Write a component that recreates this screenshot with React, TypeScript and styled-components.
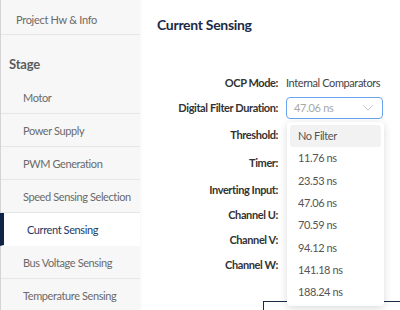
import React from 'react';
import styled, { createGlobalStyle } from 'styled-components';

const GlobalStyle = createGlobalStyle`
  html, body {
    margin: 0;
    padding: 0;
    background: #ffffff;
    font-family: Lato, 'Noto Sans', sans-serif;
    overflow: hidden;
  }
`;

interface Field {
  label: string;
  value?: string;
  h: number;
}

const fields: Field[] = [
  { label: 'OCP Mode:', value: 'Internal Comparators', h: 25 },
  { label: 'Digital Filter Duration:', h: 25 },
  { label: 'Threshold:', h: 29 },
  { label: 'Timer:', h: 27 },
  { label: 'Inverting Input:', h: 26 },
  { label: 'Channel U:', h: 25 },
  { label: 'Channel V:', h: 25 },
  { label: 'Channel W:', h: 25 },
];

const filterOptions = [
  'No Filter',
  '11.76 ns',
  '23.53 ns',
  '47.06 ns',
  '70.59 ns',
  '94.12 ns',
  '141.18 ns',
  '188.24 ns',
];

const stageItems = [
  'Motor',
  'Power Supply',
  'PWM Generation',
  'Speed Sensing Selection',
  'Current Sensing',
  'Bus Voltage Sensing',
  'Temperature Sensing',
];

const Chevron = () => (
  <svg width="10" height="6" viewBox="0 0 10 6" fill="none">
    <path d="M0.5 0.5 L5 5 L9.5 0.5" stroke="#c4c4c4" strokeWidth="1" />
  </svg>
);

const App: React.FC = () => {
  const active = 'Current Sensing';
  return (
    <Page>
      <GlobalStyle />
      <Sidebar>
        <TopItem>Project Hw &amp; Info</TopItem>
        <SectionTitle>Stage</SectionTitle>
        {stageItems.map((item) => (
          <NavItem key={item} $active={item === active}>
            {item}
          </NavItem>
        ))}
      </Sidebar>
      <Main>
        <Title>Current Sensing</Title>
        <Form>
          {fields.map((f) => (
            <Row key={f.label} $h={f.h}>
              <Label>{f.label}</Label>
              {f.value && <Value>{f.value}</Value>}
              {f.label === 'Digital Filter Duration:' && (
                <SelectWrap>
                  <SelectBox>
                    <SelectText>47.06 ns</SelectText>
                    <Chevron />
                  </SelectBox>
                  <Menu>
                    {filterOptions.map((o, i) => (
                      <MenuItem key={o} $hover={i === 0}>
                        {o}
                      </MenuItem>
                    ))}
                  </Menu>
                </SelectWrap>
              )}
            </Row>
          ))}
        </Form>
        <BottomBox />
      </Main>
    </Page>
  );
};

export default App;

const Page = styled.div`
  display: flex;
  width: 400px;
  height: 310px;
  overflow: hidden;
`;

const Sidebar = styled.div`
  width: 140px;
  flex-shrink: 0;
  background: #f7f7f7;
  border-left: 1px solid #d4d4d4;
  box-sizing: border-box;
  box-shadow: 1px 0 2px rgba(0, 0, 0, 0.04);
`;

const TopItem = styled.div`
  height: 35px;
  padding: 13px 0 0 15px;
  box-sizing: border-box;
  font-size: 11px;
  letter-spacing: -0.3px;
  color: #6a6a6a;
  border-bottom: 1px solid #e6e6e6;
`;

const SectionTitle = styled.div`
  height: 46px;
  padding: 21px 0 0 8px;
  box-sizing: border-box;
  font-size: 13px;
  letter-spacing: -0.2px;
  font-weight: 700;
  color: #5c5c5c;
`;

const NavItem = styled.div<{ $active: boolean }>`
  height: 33px;
  display: flex;
  align-items: center;
  box-sizing: border-box;
  padding-left: ${(p) => (p.$active ? '23px' : '22px')};
  font-size: 11px;
  letter-spacing: -0.4px;
  color: ${(p) => (p.$active ? '#1e3a64' : '#6a6a6a')};
  background: ${(p) => (p.$active ? '#ffffff' : 'transparent')};
  border-left: ${(p) => (p.$active ? '4px solid #0f2447' : 'none')};
  margin-left: ${(p) => (p.$active ? '-1px' : '0')};
  border-bottom: 1px solid ${(p) => (p.$active ? '#ffffff' : '#e6e6e6')};
  white-space: nowrap;
`;

const Main = styled.div`
  flex: 1;
  padding: 16px 0 0 17px;
  box-sizing: border-box;
`;

const Title = styled.div`
  font-size: 14px;
  letter-spacing: -0.3px;
  font-weight: 700;
  color: #1b2a47;
  height: 54px;
`;

const Form = styled.div`
  display: flex;
  flex-direction: column;
`;

const Row = styled.div<{ $h: number }>`
  height: ${(p) => p.$h}px;
  display: flex;
  align-items: center;
  position: relative;
`;

const Label = styled.div`
  width: 121px;
  text-align: right;
  font-size: 11px;
  letter-spacing: -0.4px;
  font-weight: 700;
  color: #333;
  white-space: nowrap;
  margin-right: 8px;
`;

const Value = styled.div`
  font-size: 11px;
  letter-spacing: -0.4px;
  color: #444;
  white-space: nowrap;
`;

const SelectWrap = styled.div`
  position: relative;
`;

const SelectBox = styled.div`
  width: 97px;
  height: 22px;
  box-sizing: border-box;
  border: 1px solid #69a4ec;
  border-radius: 4px;
  display: flex;
  align-items: center;
  justify-content: space-between;
  padding: 0 9px 0 7px;
  background: #fff;
`;

const SelectText = styled.span`
  font-size: 11px;
  letter-spacing: -0.3px;
  color: #a8a8a8;
`;

const Menu = styled.div`
  position: absolute;
  top: 25px;
  left: 1px;
  width: 97px;
  padding: 3px;
  box-sizing: border-box;
  background: #fff;
  border-radius: 4px;
  box-shadow: 0 2px 8px rgba(0, 0, 0, 0.15);
  z-index: 5;
`;

const MenuItem = styled.div<{ $hover: boolean }>`
  height: 22.3px;
  display: flex;
  align-items: center;
  padding-left: 8px;
  font-size: 11px;
  letter-spacing: -0.4px;
  color: #555;
  border-radius: 3px;
  background: ${(p) => (p.$hover ? '#f2f2f2' : 'transparent')};
`;

const BottomBox = styled.div`
  margin: 24px 0 0 106px;
  height: 30px;
  border: 1px solid #1b2a47;
  border-right: none;
`;
